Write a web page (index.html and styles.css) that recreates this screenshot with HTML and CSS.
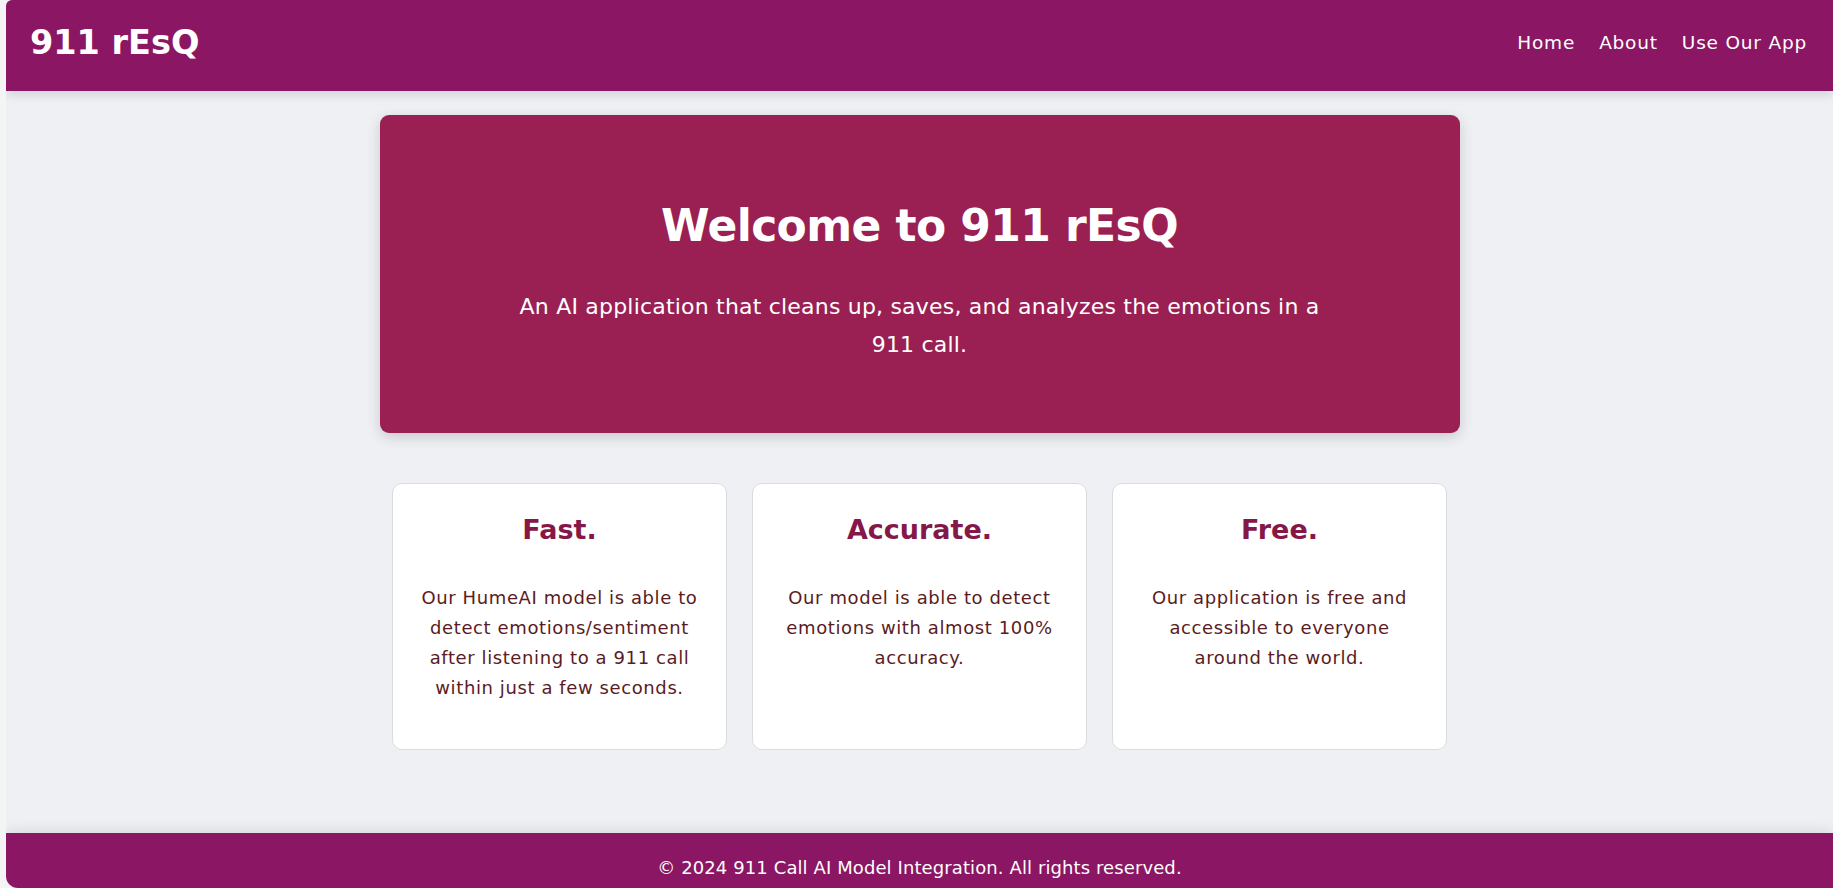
FILE: index.html
```html
<!DOCTYPE html>
<html lang="en">
<head>
<meta charset="utf-8">
<title>911 rEsQ</title>
<link rel="stylesheet" href="styles.css">
</head>
<body>
<div class="frame">
  <header class="topbar">
    <div class="logo">911 rEsQ</div>
    <nav class="nav">
      <a href="#">Home</a>
      <a href="#">About</a>
      <a href="#">Use Our App</a>
    </nav>
  </header>
  <main class="main">
    <section class="hero">
      <h1 class="hero-title">Welcome to 911 rEsQ</h1>
      <p class="hero-sub">An AI application that cleans up, saves, and analyzes the emotions in a 911 call.</p>
    </section>
    <section class="features">
      <div class="card">
        <h2 class="card-title">Fast.</h2>
        <p class="card-text">Our HumeAI model is able to detect emotions/sentiment after listening to a 911 call within just a few seconds.</p>
      </div>
      <div class="card">
        <h2 class="card-title">Accurate.</h2>
        <p class="card-text">Our model is able to detect emotions with almost 100% accuracy.</p>
      </div>
      <div class="card">
        <h2 class="card-title">Free.</h2>
        <p class="card-text">Our application is free and accessible to everyone around the world.</p>
      </div>
    </section>
  </main>
  <footer class="footer">© 2024 911 Call AI Model Integration. All rights reserved.</footer>
</div>
</body>
</html>
```
FILE: styles.css
```css
* { box-sizing: border-box; }
html, body { margin: 0; padding: 0; }
body {
  background: #f4f4f5;
  font-family: "DejaVu Sans", "Liberation Sans", sans-serif;
  padding-left: 6px;
}
.frame {
  height: 100vh;
  display: flex;
  flex-direction: column;
  overflow: hidden;
  border-top-left-radius: 6px;
  border-bottom-left-radius: 12px;
  background: #eff0f4;
}
.topbar {
  flex: 0 0 91px;
  background: #8b1663;
  display: flex;
  align-items: center;
  justify-content: space-between;
  padding: 0 26px 6px 24px;
  box-shadow: 0 4px 10px rgba(0,0,0,0.12);
  position: relative;
  z-index: 2;
}
.logo {
  color: #fff;
  font-weight: bold;
  font-size: 33.5px;
}
.nav { display: flex; gap: 24px; }
.nav a {
  color: #fff;
  text-decoration: none;
  font-size: 18.5px;
  letter-spacing: 0.8px;
}
.main {
  flex: 0 0 742px;
  display: flex;
  flex-direction: column;
  align-items: center;
  padding-top: 24px;
}
.hero {
  width: 1080px;
  background: #9a2054;
  border-radius: 9px;
  box-shadow: 0 4px 14px rgba(0,0,0,0.16);
  padding: 85px 40px 69px;
  text-align: center;
  color: #fff;
}
.hero-title {
  margin: 0 0 35px;
  font-size: 44px;
  line-height: 1.2;
  font-weight: bold;
  letter-spacing: -0.6px;
}
.hero-sub {
  margin: 0 auto;
  max-width: 825px;
  font-size: 22px;
  line-height: 38px;
  letter-spacing: 0.2px;
}
.features {
  width: 1080px;
  padding: 0 12.5px;
  margin-top: 50px;
  display: flex;
  gap: 25px;
}
.card {
  flex: 1 1 0;
  background: #fff;
  border: 1px solid #dcdce0;
  border-radius: 10px;
  padding: 29px 22px 46px;
  text-align: center;
}
.card-title {
  margin: 0 0 36px;
  color: #861749;
  font-size: 27px;
  line-height: 34px;
  font-weight: bold;
}
.card-text {
  margin: 0;
  color: #5a1b22;
  font-size: 18px;
  line-height: 30px;
  letter-spacing: 0.6px;
}
.footer {
  flex: 0 0 68px;
  background: #8b1663;
  color: #fff;
  font-size: 18px;
  letter-spacing: 0.1px;
  text-align: center;
  padding-top: 24px;
  box-shadow: 0 -4px 12px rgba(0,0,0,0.08);
  position: relative;
  z-index: 2;
}
```
